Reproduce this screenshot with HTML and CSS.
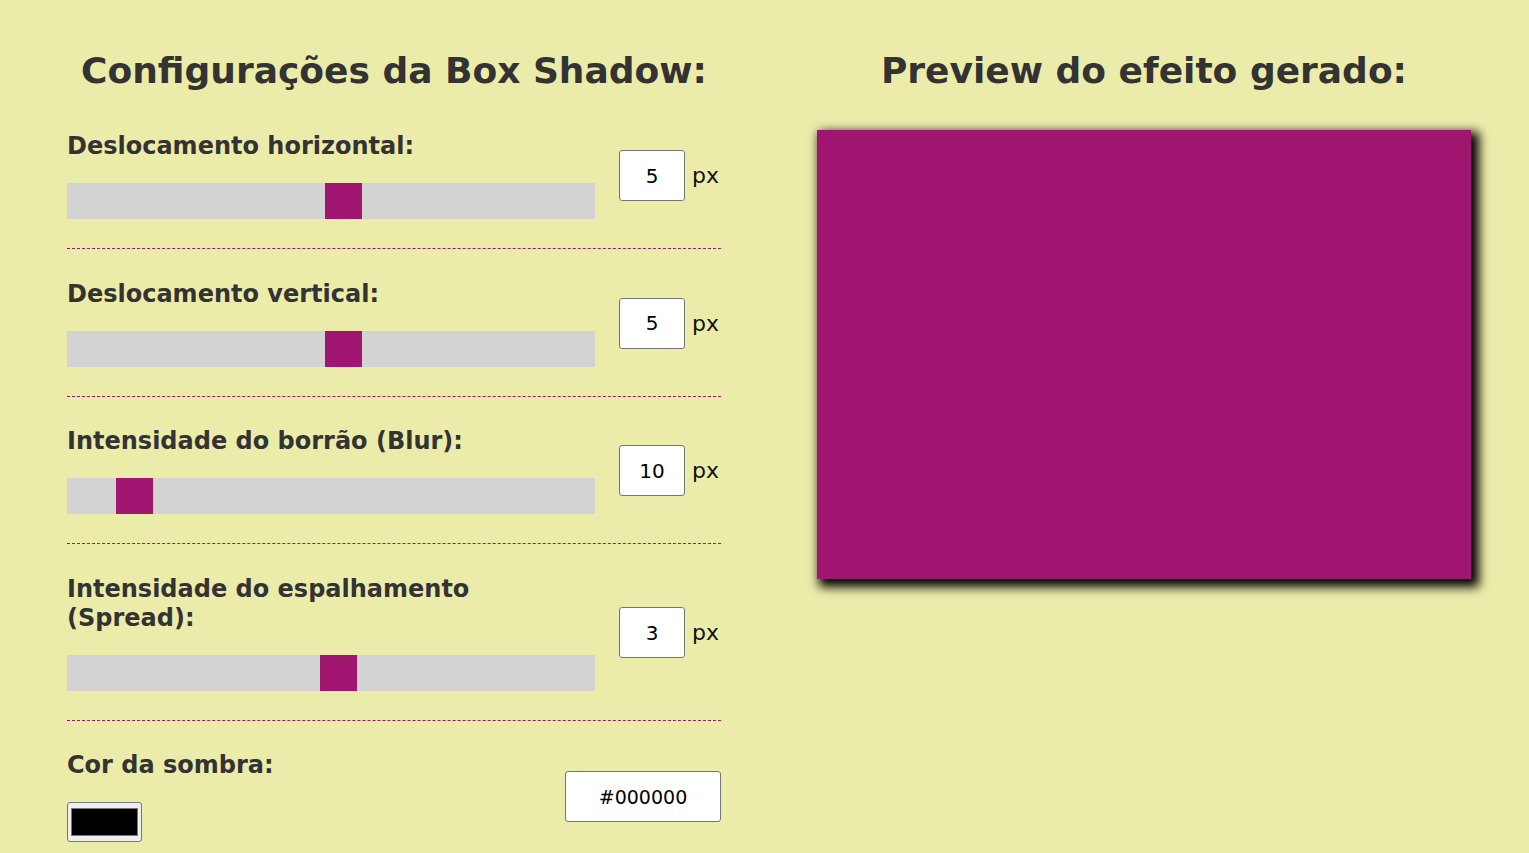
FILE: index.html
```html
<!DOCTYPE html>
<html lang="pt-BR">
<head>
<meta charset="utf-8">
<title>Box Shadow Generator</title>
<link rel="stylesheet" href="styles.css">
</head>
<body>
<main class="page">
  <section class="panel">
    <h1 class="title">Configurações da Box Shadow:</h1>
    <div class="rows">
      <div class="row">
        <div class="control">
          <label class="label" for="h">Deslocamento horizontal:</label>
          <input class="range" id="h" type="range" min="-100" max="100" value="5">
        </div>
        <div class="value"><input class="num" type="number" value="5"><span class="unit">px</span></div>
      </div>
      <div class="row">
        <div class="control">
          <label class="label" for="v">Deslocamento vertical:</label>
          <input class="range" id="v" type="range" min="-100" max="100" value="5">
        </div>
        <div class="value"><input class="num" type="number" value="5"><span class="unit">px</span></div>
      </div>
      <div class="row">
        <div class="control">
          <label class="label" for="b">Intensidade do borrão (Blur):</label>
          <input class="range" id="b" type="range" min="0" max="100" value="10">
        </div>
        <div class="value"><input class="num" type="number" value="10"><span class="unit">px</span></div>
      </div>
      <div class="row">
        <div class="control">
          <label class="label" for="s">Intensidade do espalhamento (Spread):</label>
          <input class="range" id="s" type="range" min="-100" max="100" value="3">
        </div>
        <div class="value"><input class="num" type="number" value="3"><span class="unit">px</span></div>
      </div>
      <div class="row row-color">
        <div class="control">
          <label class="label" for="c">Cor da sombra:</label>
          <input class="color" id="c" type="color" value="#000000">
        </div>
        <input class="hex" type="text" value="#000000">
      </div>
    </div>
  </section>
  <section class="panel">
    <h1 class="title">Preview do efeito gerado:</h1>
    <div class="preview"></div>
  </section>
</main>
</body>
</html>
```
FILE: styles.css
```css
html, body {
  margin: 0;
  padding: 0;
}
body {
  background: #ececaa;
  color: #333;
  font-family: Tahoma, "DejaVu Sans", Verdana, sans-serif;
}
.page {
  display: grid;
  grid-template-columns: 654px 654px;
  column-gap: 96px;
  padding-left: 67px;
}
.title {
  font-size: 36px;
  line-height: 43px;
  font-weight: bold;
  text-align: center;
  margin: 49px 0 38px;
}
.rows {
  padding-top: 2px;
}
.row {
  display: flex;
  align-items: center;
  gap: 24px;
  padding-bottom: 29px;
  border-bottom: 1px dashed #a0156f;
  margin-bottom: 30.5px;
}
.row-color {
  border-bottom: none;
  justify-content: space-between;
  margin-bottom: 0;
}
.control {
  width: 528px;
  display: flex;
  flex-direction: column;
  align-items: flex-start;
}
.label {
  font-size: 24px;
  line-height: 29px;
  font-weight: bold;
  margin-bottom: 22px;
}
.range {
  -webkit-appearance: none;
  appearance: none;
  width: 528px;
  height: 36px;
  margin: 0;
  background: #d3d3d3;
  outline: none;
}
.range::-webkit-slider-thumb {
  -webkit-appearance: none;
  appearance: none;
  width: 37px;
  height: 36px;
  background: #a0156f;
  border: none;
  border-radius: 0;
}
.value {
  display: flex;
  align-items: center;
}
.num {
  box-sizing: border-box;
  width: 66px;
  height: 51px;
  border: 1px solid #767676;
  border-radius: 3px;
  background: #fff;
  text-align: center;
  font-family: Tahoma, "DejaVu Sans", sans-serif;
  font-size: 20px;
  color: #000;
  padding: 0;
  -moz-appearance: textfield;
}
.num::-webkit-inner-spin-button,
.num::-webkit-outer-spin-button {
  -webkit-appearance: none;
  margin: 0;
}
.unit {
  font-size: 22px;
  color: #111;
  margin-left: 7px;
}
.color {
  box-sizing: border-box;
  width: 75px;
  height: 40px;
  padding: 0;
  border: 1px solid #767676;
  border-radius: 3px;
  background: #efefef;
  cursor: pointer;
}
.color::-webkit-color-swatch-wrapper {
  padding: 5px 3px;
}
.color::-webkit-color-swatch {
  border: 1px solid #777;
  border-radius: 0;
}
.hex {
  box-sizing: border-box;
  width: 156px;
  height: 51px;
  border: 1px solid #767676;
  border-radius: 3px;
  background: #fff;
  text-align: center;
  font-family: Tahoma, "DejaVu Sans", sans-serif;
  font-size: 19px;
  color: #000;
  padding: 0;
}
.preview {
  width: 654px;
  height: 449px;
  background: #a0156f;
  box-shadow: 5px 5px 10px 3px #000;
}
```
